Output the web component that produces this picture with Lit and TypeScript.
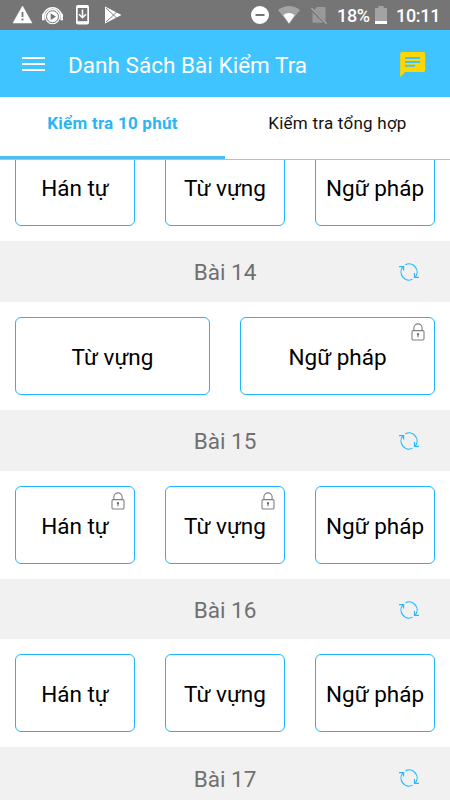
import { LitElement, html, css, nothing } from "lit";
import { customElement, property } from "lit/decorators.js";

interface Quiz {
  label: string;
  locked?: boolean;
}
interface Lesson {
  title?: string;
  quizzes: Quiz[];
}

const KANJI = "Hán tự";
const VOCAB = "Từ vựng";
const GRAMMAR = "Ngữ pháp";

const LESSONS: Lesson[] = [
  { quizzes: [{ label: KANJI }, { label: VOCAB }, { label: GRAMMAR }] },
  { title: "Bài 14", quizzes: [{ label: VOCAB }, { label: GRAMMAR, locked: true }] },
  {
    title: "Bài 15",
    quizzes: [{ label: KANJI, locked: true }, { label: VOCAB, locked: true }, { label: GRAMMAR }],
  },
  { title: "Bài 16", quizzes: [{ label: KANJI }, { label: VOCAB }, { label: GRAMMAR }] },
  { title: "Bài 17", quizzes: [] },
];

const refreshIcon = html`<svg class="refresh" width="22" height="20" viewBox="0 0 22 20">
  <g fill="none" stroke="#29b9fb" stroke-width="1.2">
    <path d="M7.4 2.8 A8 8 0 0 1 17.4 14.8" />
    <path d="M14.4 17.3 A8 8 0 0 1 4.9 4.9" />
    <path d="M1 4.6 H5.6 V8.6" />
    <path d="M21 15.4 H16.5 V11" />
  </g>
</svg>`;

const lockIcon = html`<svg class="lock" width="14" height="18" viewBox="0 0 14 18">
  <g fill="none" stroke="#808080" stroke-width="1.1">
    <rect x="1" y="7.6" width="12" height="9.4" rx="1.2" />
    <path d="M2.9 7.6 V5 A4.1 4.1 0 0 1 11.1 5 V7.6" />
  </g>
  <circle cx="7" cy="11.2" r="1.1" fill="#666" />
  <path d="M7 11 V14.3" stroke="#666" stroke-width="1" />
</svg>`;

@customElement("status-bar")
export class StatusBar extends LitElement {
  static styles = css`
    :host {
      display: flex;
      justify-content: space-between;
      height: 30px;
      background: #757575;
      color: #fff;
      font: 500 18px Roboto, sans-serif;
    }
    svg {
      display: block;
    }
    .clock {
      display: flex;
      align-items: center;
      padding-right: 11px;
      line-height: 30px;
    }
    .percent {
      width: 33px;
      white-space: nowrap;
      padding-top: 2px;
      letter-spacing: -0.3px;
    }
    .time {
      width: 43px;
      white-space: nowrap;
      padding-top: 2px;
      letter-spacing: -0.3px;
    }
  `;

  render() {
    return html`
      <svg width="130" height="30" viewBox="0 0 130 30">
        <path d="M22.5 6 L32 23 H13 Z" fill="#fff" stroke="#fff" stroke-width=".5" stroke-linejoin="round" />
        <path d="M22.5 12 V17 M22.5 18.6 V20.6" stroke="#757575" stroke-width="1.8" />
        <path d="M43.6 15 A9 8.6 0 0 1 61.4 15" fill="none" stroke="#fff" stroke-width="1.4" />
        <circle cx="52.5" cy="16.5" r="7.8" fill="#fff" />
        <circle cx="52.5" cy="16.7" r="6" fill="none" stroke="#757575" stroke-width="1" />
        <rect x="42" y="13.5" width="2.6" height="7" rx="1.3" fill="#fff" />
        <rect x="60.4" y="13.5" width="2.6" height="7" rx="1.3" fill="#fff" />
        <path d="M50.7 13.3 L56 16.7 L50.7 20.1 Z" fill="#757575" />
        <rect x="76" y="5" width="13" height="19.5" rx="2" fill="#fff" />
        <rect x="77.7" y="8" width="9.6" height="13.2" fill="#757575" />
        <path d="M82.5 9.5 V17.5 M79 14.3 L82.5 17.8 L86 14.3" fill="none" stroke="#fff" stroke-width="1.5" />
        <path d="M105 6.5 L121.5 15 L105 23.5 Z" fill="#fff" />
        <path d="M106 8 L117.8 19 M106 22 L117.8 11" stroke="#757575" stroke-width="0.9" />
      </svg>
      <div class="clock">
        <svg width="87" height="30" viewBox="250 0 87 30">
          <circle cx="260" cy="15" r="9" fill="#fff" />
          <rect x="255.5" y="14" width="9" height="2" fill="#757575" />
          <path d="M278 10 Q289 2 300 10 L289 24 Z" fill="#a3a3a3" />
          <path d="M283.3 15 Q289 11 294.7 15 L289 23.5 Z" fill="#fff" />
          <path d="M317 7 H325.5 V22.8 H312.5 V11.5 Z" fill="#999" />
          <path d="M310 7.6 L326.5 24" stroke="#757575" stroke-width="3" />
          <path d="M311.3 8 L326.6 23.6" stroke="#a3a3a3" stroke-width="1.5" />
        </svg>
        <span class="percent">18%</span>
        <svg width="26" height="30" viewBox="370 0 26 30">
          <path d="M375 8 H378.4 V6 H383.6 V8 H387 V24 H375 Z" fill="#a3a3a3" />
          <rect x="375" y="21" width="12" height="3" fill="#fff" />
        </svg>
        <span class="time">10:11</span>
      </div>
    `;
  }
}

@customElement("lesson-group")
export class LessonGroup extends LitElement {
  @property({ attribute: false }) lesson!: Lesson;

  static styles = css`
    :host {
      display: block;
    }
    .head {
      display: grid;
      grid-template-columns: 1fr auto 1fr;
      align-items: center;
      height: 60.75px;
      background: #f1f1f1;
      color: #707070;
      font-size: 22.5px;
      line-height: 28px;
    }
    .name {
      grid-column: 2;
      padding-top: 1.4px;
    }
    .refresh {
      justify-self: end;
      margin-right: 30px;
      margin-top: 1px;
    }
    .cards {
      display: flex;
      gap: 30px;
      padding: 15px;
    }
    .card {
      position: relative;
      flex: 1 1 0;
      display: flex;
      align-items: center;
      justify-content: center;
      box-sizing: border-box;
      height: 78px;
      padding-top: 2px;
      border: 1px solid #1fb6fb;
      border-radius: 6px;
      background: #fff;
      color: #000;
      font-size: 22.5px;
      white-space: nowrap;
    }
    .lock {
      position: absolute;
      top: 5px;
      right: 9.5px;
    }
  `;

  render() {
    const { title, quizzes } = this.lesson;
    return html`
      ${title ? html`<div class="head"><span class="name">${title}</span>${refreshIcon}</div>` : nothing}
      <div class="cards">
        ${quizzes.map(
          (q) => html`<div class="card">${q.label}${q.locked ? lockIcon : nothing}</div>`
        )}
      </div>
    `;
  }
}

@customElement("app-root")
export class AppRoot extends LitElement {
  static styles = css`
    :host {
      display: flex;
      flex-direction: column;
      width: 450px;
      height: 800px;
      overflow: hidden;
      background: #fff;
      font-family: Roboto, sans-serif;
    }
    .bar {
      flex: none;
      display: flex;
      align-items: center;
      box-sizing: border-box;
      height: 67px;
      padding: 0 24px 0 22px;
      background: #40c4ff;
      color: #fff;
    }
    .title {
      flex: 1;
      margin-left: 22px;
      padding-top: 3px;
      font-size: 22.5px;
      letter-spacing: 0.03px;
      white-space: nowrap;
    }
    .tabs {
      flex: none;
      display: flex;
      box-sizing: border-box;
      height: 63px;
      border-bottom: 1px solid #bdbdbd;
    }
    .tab {
      flex: 1;
      box-sizing: border-box;
      padding-top: 15px;
      text-align: center;
      font-size: 17px;
      line-height: 22px;
      letter-spacing: 0.24px;
      color: #111;
    }
    .active {
      color: #29b6f6;
      font-weight: 700;
      border-bottom: 3px solid #4fbdf0;
    }
    .list {
      flex: 1;
      min-height: 0;
      overflow: hidden;
    }
    .scrolled {
      margin-top: -26.8px;
    }
  `;

  render() {
    return html`
      <status-bar></status-bar>
      <div class="bar">
        <svg width="24" height="20" viewBox="0 0 24 20">
          <path d="M0 4 H23 M0 10 H23 M0 16 H23" stroke="#fff" stroke-width="1.8" />
        </svg>
        <div class="title">Danh Sách Bài Kiểm Tra</div>
        <svg width="26" height="26" viewBox="0 0 26 26">
          <path d="M2.3 1 H23.2 Q25.2 1 25.2 3 V19 Q25.2 21 23.2 21 H5.2 L0.2 26 V3 Q0.2 1 2.3 1 Z" fill="#ffd600" />
          <path d="M5 7 H20.2 M5 11 H20.2 M5 14.8 H15" stroke="#40c4ff" stroke-width="2" />
        </svg>
      </div>
      <div class="tabs">
        <div class="tab active">Kiểm tra 10 phút</div>
        <div class="tab">Kiểm tra tổng hợp</div>
      </div>
      <div class="list">
        <div class="scrolled">
          ${LESSONS.map((l) => html`<lesson-group .lesson=${l}></lesson-group>`)}
        </div>
      </div>
    `;
  }
}
